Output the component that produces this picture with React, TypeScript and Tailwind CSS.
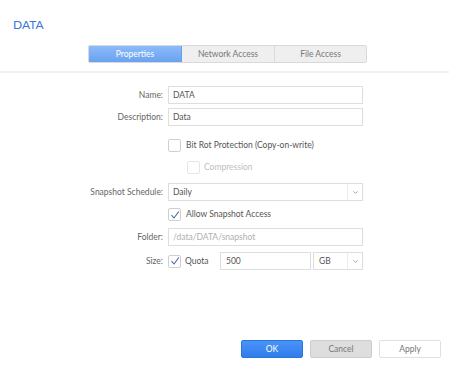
import { ChevronDown } from "lucide-react";

const font = { fontFamily: "Lato, 'Open Sans', sans-serif" };

function Check({ checked, disabled }: { checked?: boolean; disabled?: boolean }) {
  return (
    <span
      className={`w-[13px] h-[13px] shrink-0 flex items-center justify-center border rounded-[2px] bg-white ${
        disabled ? "border-[#e6e6e6]" : "border-[#cfcfcf]"
      }`}
    >
      {checked && (
        <svg width="10" height="10" viewBox="0 0 10 10">
          <path d="M1.5 5.2 L4 8 L8.8 1.5" fill="none" stroke="#4a67a3" strokeWidth="1.1" />
        </svg>
      )}
    </span>
  );
}

function Field({ value, muted }: { value: string; muted?: boolean }) {
  return (
    <div
      className={`h-[18px] w-[195px] border border-[#dedede] px-[4px] flex items-center text-[8.5px] ${
        muted ? "text-[#b0b0b0]" : "text-[#555]"
      }`}
    >
      {value}
    </div>
  );
}

function Label({ children }: { children: React.ReactNode }) {
  return <div className="w-[168px] pr-[5px] text-right text-[8.5px] text-[#666]">{children}</div>;
}

export default function App() {
  return (
    <div className="w-[449px] h-[373px] bg-white flex flex-col overflow-hidden" style={font}>
      <div className="pt-[18px] pl-[13px] text-[12px] text-[#3a78dc] leading-[14px]">DATA</div>

      {/* Tabs */}
      <div className="mt-[13px] ml-[88px] flex h-[18px] w-[279px] border border-[#d9d9d9] rounded-[2px] text-[8.5px]">
        <div className="w-[93px] flex items-center justify-center text-white bg-gradient-to-b from-[#8cbaf8] to-[#6aa2f1] border-r border-[#6a9ee8]">
          Properties
        </div>
        <div className="w-[93px] flex items-center justify-center text-[#777] bg-[#efefef] border-r border-[#dcdcdc]">
          Network Access
        </div>
        <div className="flex-1 flex items-center justify-center text-[#777] bg-[#efefef]">File Access</div>
      </div>

      <div className="mt-[8px] h-[2px] bg-[#f2f2f2]" />

      {/* Form */}
      <div className="flex flex-col mt-[13px]">
        <div className="flex items-center">
          <Label>Name:</Label>
          <Field value="DATA" />
        </div>
        <div className="flex items-center mt-[4px]">
          <Label>Description:</Label>
          <Field value="Data" />
        </div>
        <div className="flex items-center mt-[13px] pl-[168px] gap-[5px] text-[8.5px] text-[#555]">
          <Check />
          <span>Bit Rot Protection (Copy-on-write)</span>
        </div>
        <div className="flex items-center mt-[9px] pl-[187px] gap-[4px] text-[8.5px] text-[#c0c0c0]">
          <Check disabled />
          <span>Compression</span>
        </div>
        <div className="flex items-center mt-[9px]">
          <Label>Snapshot Schedule:</Label>
          <div className="h-[18px] w-[195px] border border-[#dedede] flex items-center text-[8.5px] text-[#555]">
            <span className="flex-1 px-[4px]">Daily</span>
            <span className="w-[15px] h-full flex items-center justify-center border-l border-[#ececec]">
              <ChevronDown className="w-[7px] h-[7px] text-[#999]" strokeWidth={3} />
            </span>
          </div>
        </div>
        <div className="flex items-center mt-[7px] pl-[168px] gap-[5px] text-[8.5px] text-[#555]">
          <Check checked />
          <span>Allow Snapshot Access</span>
        </div>
        <div className="flex items-center mt-[7px]">
          <Label>Folder:</Label>
          <Field value="/data/DATA/snapshot" muted />
        </div>
        <div className="flex items-center mt-[6px]">
          <Label>Size:</Label>
          <div className="flex items-center w-[195px] text-[8.5px] text-[#555]">
            <Check checked />
            <span className="ml-[4px] w-[35px]">Quota</span>
            <div className="h-[18px] w-[91px] border border-[#dedede] px-[5px] flex items-center">500</div>
            <div className="ml-[2px] h-[18px] flex-1 border border-[#dedede] flex items-center">
              <span className="flex-1 px-[5px]">GB</span>
              <span className="w-[15px] h-full flex items-center justify-center border-l border-[#ececec]">
                <ChevronDown className="w-[7px] h-[7px] text-[#999]" strokeWidth={3} />
              </span>
            </div>
          </div>
        </div>
      </div>

      {/* Footer buttons */}
      <div className="mt-auto mb-[15px] flex justify-end gap-[7px] pr-[8px] text-[8.5px]">
        <button className="w-[62px] h-[18px] rounded-[2px] bg-gradient-to-b from-[#4a93f7] to-[#2f7ceb] text-white border border-[#2b74e0]">
          OK
        </button>
        <button className="w-[62px] h-[18px] rounded-[2px] bg-[#dedede] text-[#777] border border-[#cccccc]">
          Cancel
        </button>
        <button className="w-[62px] h-[18px] rounded-[2px] bg-white text-[#777] border border-[#e0e0e0]">
          Apply
        </button>
      </div>
    </div>
  );
}
